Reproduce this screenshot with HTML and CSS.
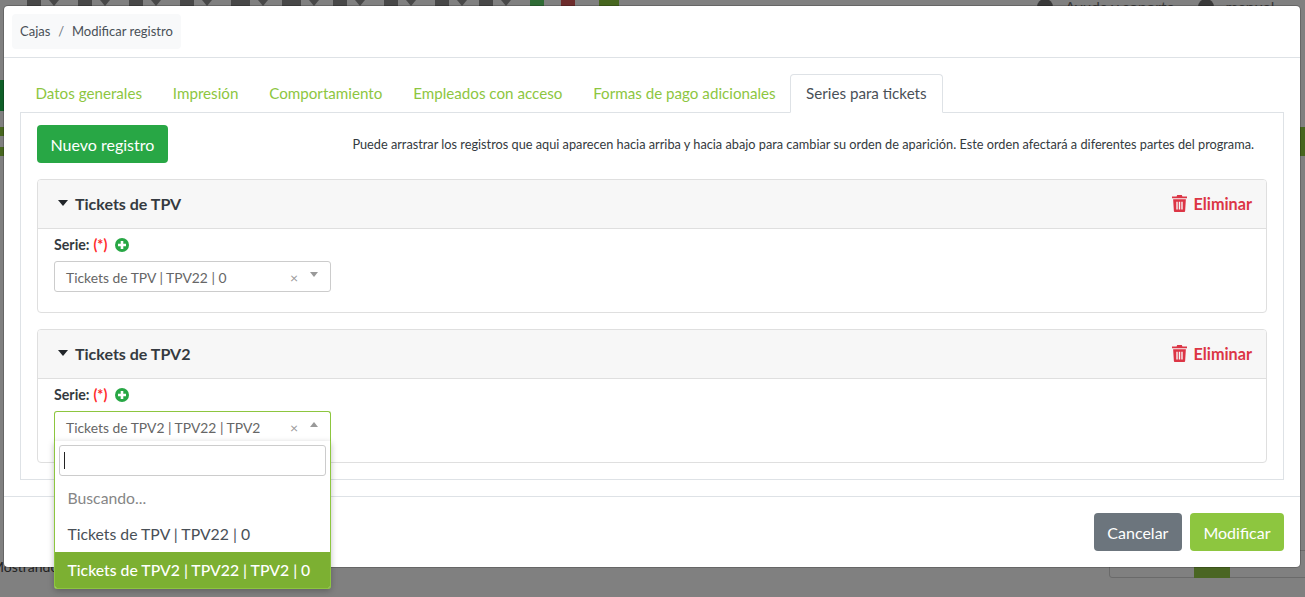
FILE: index.html
```html
<!DOCTYPE html>
<html lang="es">
<head>
    <meta charset="UTF-8">
    <title>Cajas - Modificar registro</title>
    <link rel="stylesheet" href="styles.css">
</head>
<body>
    <!-- page behind the dialog -->
    <div class="backdrop">
        <div class="top-tools">
            <span class="tool"><i class="tool-icon"></i><i class="tool-caret"></i></span>
            <span class="tool"><i class="tool-icon"></i><i class="tool-caret"></i></span>
            <span class="tool"><i class="tool-icon"></i><i class="tool-caret"></i></span>
            <span class="tool"><i class="tool-icon"></i><i class="tool-caret"></i></span>
            <span class="tool"><i class="tool-icon tool-wide"></i><i class="tool-caret"></i></span>
            <span class="tool"><i class="tool-icon tool-wide"></i><i class="tool-caret"></i></span>
            <span class="tool"><i class="tool-icon"></i><i class="tool-caret"></i></span>
            <span class="tool"><i class="tool-icon"></i><i class="tool-caret"></i></span>
            <span class="tool tool-short"><i class="tool-icon"></i><i class="tool-caret"></i></span>
            <span class="tool"><i class="tool-icon"></i><i class="tool-caret"></i></span>
            <i class="tool-icon tool-green"></i>
            <i class="tool-icon tool-red"></i>
            <i class="tool-icon tool-lime"></i>
        </div>
        <div class="top-help">
            <i class="help-dot"></i><span>Ayuda y soporte</span>
            <i class="help-dot"></i><span>manual</span>
        </div>
        <div class="side-bits">
            <div class="side-green"></div>
            <div class="side-olive"></div>
            <div class="side-olive"></div>
        </div>
        <div class="right-bar"></div>
        <div class="showing">Mostrando</div>
        <div class="pager"><span class="pager-on"></span></div>
    </div>

    <div class="modal">
        <div class="modal-head">
            <div class="breadcrumb">Cajas <span class="crumb-sep">/</span> Modificar registro</div>
        </div>
        <div class="modal-body">
            <ul class="tabs">
                <li>Datos generales</li>
                <li>Impresión</li>
                <li>Comportamiento</li>
                <li>Empleados con acceso</li>
                <li>Formas de pago adicionales</li>
                <li class="active">Series para tickets</li>
            </ul>
            <div class="tab-pane">
                <div class="toolbar">
                    <button class="btn btn-new">Nuevo registro</button>
                    <p class="hint">Puede arrastrar los registros que aqui aparecen hacia arriba y hacia abajo para cambiar su orden de aparición. Este orden afectará a diferentes partes del programa.</p>
                </div>

                <div class="panel">
                    <div class="panel-head">
                        <span class="caret"></span>
                        <span class="panel-title">Tickets de TPV</span>
                        <a class="delete">
                            <svg class="trash" viewBox="0 0 16 18"><path d="M5.500 0h5l.6 1.500H16v2H0v-2h4.900zM1.200 4.500h13.600L14 17a1 1 0 0 1-1 1H3a1 1 0 0 1-1-1zM4.600 7v8.500h1.500V7zm2.650 0v8.500h1.500V7zm2.650 0v8.500h1.500V7z" fill-rule="evenodd"/></svg>
                            Eliminar
                        </a>
                    </div>
                    <div class="panel-body">
                        <div class="field-label">Serie: <span class="required">(*)</span>
                            <svg class="plus" viewBox="0 0 14 14"><circle cx="7" cy="7" r="7"/><path d="M5.700 3h2.600v2.700H11v2.600H8.300V11H5.700V8.300H3V5.700h2.700z" fill="#fff"/></svg>
                        </div>
                        <div class="select">
                            <span class="select-text">Tickets de TPV | TPV22 | 0</span>
                            <span class="select-x">×</span>
                            <span class="arrow-down"></span>
                        </div>
                    </div>
                </div>

                <div class="panel panel-last">
                    <div class="panel-head">
                        <span class="caret"></span>
                        <span class="panel-title">Tickets de TPV2</span>
                        <a class="delete">
                            <svg class="trash" viewBox="0 0 16 18"><path d="M5.500 0h5l.6 1.500H16v2H0v-2h4.900zM1.200 4.500h13.600L14 17a1 1 0 0 1-1 1H3a1 1 0 0 1-1-1zM4.600 7v8.500h1.500V7zm2.650 0v8.500h1.500V7zm2.650 0v8.500h1.500V7z" fill-rule="evenodd"/></svg>
                            Eliminar
                        </a>
                    </div>
                    <div class="panel-body">
                        <div class="field-label">Serie: <span class="required">(*)</span>
                            <svg class="plus" viewBox="0 0 14 14"><circle cx="7" cy="7" r="7"/><path d="M5.700 3h2.600v2.700H11v2.600H8.300V11H5.700V8.300H3V5.700h2.700z" fill="#fff"/></svg>
                        </div>
                        <div class="select select-open">
                            <span class="select-text">Tickets de TPV2 | TPV22 | TPV2</span>
                            <span class="select-x">×</span>
                            <span class="arrow-up"></span>
                            <div class="dropdown">
                                <div class="search-box"><span class="cursor"></span></div>
                                <div class="option option-muted">Buscando...</div>
                                <div class="option">Tickets de TPV | TPV22 | 0</div>
                                <div class="option option-on">Tickets de TPV2 | TPV22 | TPV2 | 0</div>
                            </div>
                        </div>
                    </div>
                </div>
            </div>
        </div>
        <div class="modal-foot">
            <button class="btn btn-cancel">Cancelar</button>
            <button class="btn btn-save">Modificar</button>
        </div>
    </div>
</body>
</html>
```

FILE: styles.css
```css
html, body {
    height: 100%;
}
body {
    margin: 0;
    overflow: hidden;
    font-family: 'Lato', sans-serif;
    font-size: 14px;
    color: #343a40;
    background-color: #808080;
}
.backdrop {
    position: absolute;
    top: 0;
    right: 0;
    bottom: 0;
    left: 0;
    overflow: hidden;
}
.top-tools {
    position: absolute;
    top: 0;
    left: 27px;
    display: flex;
    height: 6px;
}
.tool {
    display: flex;
    width: 51px;
}
.tool-short {
    width: 44px;
}
.tool-icon {
    display: block;
    width: 14px;
    height: 6px;
    background-color: #484848;
}
.tool-wide {
    width: 19px;
}
.tool-caret {
    width: 0;
    height: 0;
    margin-left: 8px;
    border-left: 5px solid transparent;
    border-right: 5px solid transparent;
    border-top: 6px solid #484848;
}
.tool-green {
    margin-right: 17px;
    background-color: #2f6b35;
}
.tool-red {
    margin-right: 24px;
    background-color: #6d2c2c;
}
.tool-lime {
    width: 20px;
    background-color: #47661f;
}
.top-help {
    position: absolute;
    top: -2px;
    left: 1037px;
    display: flex;
    align-items: center;
    gap: 12px;
    font-size: 15.400px;
    color: #3a3a3a;
    white-space: nowrap;
}
.help-dot {
    display: block;
    width: 16px;
    height: 16px;
    border-radius: 50%;
    background-color: #3a3a3a;
}
.top-help span + .help-dot {
    margin-left: 11px;
}
.side-bits {
    position: absolute;
    top: 80px;
    left: 0;
    width: 4px;
}
.side-green {
    height: 31px;
    background-color: #0f5f28;
}
.side-olive {
    height: 9px;
    margin-top: 16px;
    background-color: #47661f;
}
.side-olive + .side-olive {
    margin-top: 11px;
}
.right-bar {
    position: absolute;
    top: 127px;
    right: 0;
    width: 5px;
    height: 29px;
    background-color: #47661f;
}
.showing {
    position: absolute;
    top: 558px;
    left: -9px;
    font-size: 14px;
    color: #222;
}
.pager {
    position: absolute;
    top: 550px;
    left: 1109px;
    width: 220px;
    height: 26px;
    border: 1px solid #6a6a6a;
    border-radius: 3px;
}
.pager-on {
    display: block;
    width: 36px;
    height: 27px;
    margin-left: 84px;
    background-color: #4a6623;
}

.modal {
    position: absolute;
    top: 6px;
    left: 4px;
    width: 1296px;
    height: 561px;
    display: flex;
    flex-direction: column;
    box-sizing: border-box;
    background-color: #fff;
    border-radius: 4px;
    box-shadow: 0 0 0 1px rgba(0, 0, 0, 0.2);
}
.modal-head {
    height: 52px;
    box-sizing: border-box;
    border-bottom: 1px solid #dee2e6;
    padding: 8px 8px 0;
    flex-shrink: 0;
}
.breadcrumb {
    display: inline-block;
    padding: 0 8px;
    line-height: 35px;
    height: 35px;
    font-size: 13px;
    color: #495057;
    background-color: #f8f9fa;
    border-radius: 4px;
}
.crumb-sep {
    margin: 0 4.500px;
    color: #6c757d;
}
.modal-body {
    flex: 1;
    padding: 16px;
}
.tabs {
    display: flex;
    list-style: none;
    margin: 0;
    padding: 0;
    height: 39px;
    font-size: 15.180px;
    color: #8dc63f;
}
.tabs li {
    padding: 0 14.400px;
    line-height: 37px;
    border: 1px solid transparent;
}
.tabs li.active {
    margin-left: -1px;
    padding: 0 15px;
    color: #495057;
    background-color: #fff;
    border: 1px solid #dee2e6;
    border-bottom-color: #fff;
    border-radius: 4px 4px 0 0;
    position: relative;
    z-index: 1;
    height: 39px;
    box-sizing: border-box;
}
.tab-pane {
    border: 1px solid #dee2e6;
    margin-top: -1px;
    padding: 12px 16px 16px;
    height: 368px;
    box-sizing: border-box;
}
.toolbar {
    display: flex;
    align-items: center;
    justify-content: space-between;
    margin-bottom: 16px;
}
.hint {
    margin: 0 13px 0 0;
    font-size: 12.740px;
    color: #343a40;
}
.btn {
    border: none;
    border-radius: 4px;
    font-family: inherit;
    font-size: 16px;
    color: #fff;
    height: 38px;
    padding: 0 13.500px;
}
.btn-new {
    background-color: #28a745;
}
.btn-cancel {
    background-color: #6c757d;
}
.btn-save {
    background-color: #8dc63f;
}
.panel {
    border: 1px solid #dfdfdf;
    border-radius: 4px;
    margin-bottom: 16px;
    height: 134px;
    box-sizing: border-box;
}
.panel-last {
    margin-bottom: 0;
}
.panel-head {
    display: flex;
    align-items: center;
    height: 49px;
    box-sizing: border-box;
    padding: 0 14px 2px 20px;
    background-color: #f7f7f7;
    border-bottom: 1px solid #dfdfdf;
    border-radius: 3px 3px 0 0;
}
.caret {
    width: 0;
    height: 0;
    border-left: 5.500px solid transparent;
    border-right: 5.500px solid transparent;
    border-top: 6px solid #212529;
    margin-right: 7px;
}
.panel-title {
    flex: 1;
    font-size: 16px;
    font-weight: 700;
}
.delete {
    display: flex;
    align-items: center;
    gap: 7px;
    font-size: 16.200px;
    font-weight: 700;
    color: #dc3545;
}
.trash {
    width: 15px;
    height: 17px;
    fill: #dc3545;
}
.panel-body {
    padding: 6px 16px 0;
}
.field-label {
    display: flex;
    align-items: center;
    height: 19px;
    font-size: 14.200px;
    font-weight: 700;
    margin-bottom: 7px;
}
.required {
    color: #ff2a2a;
    margin-left: 4px;
}
.plus {
    width: 14px;
    height: 14px;
    margin-left: 8px;
    fill: #28a745;
}
.select {
    position: relative;
    display: flex;
    align-items: center;
    width: 277px;
    height: 31px;
    box-sizing: border-box;
    border: 1px solid #ccc;
    border-radius: 3px;
    padding: 2px 12px 0 11px;
    font-size: 13.850px;
    color: #666;
    background-color: #fff;
}
.select-text {
    flex: 1;
}
.select-x {
    color: #999;
    font-size: 14px;
    margin-right: 12px;
}
.arrow-down {
    width: 0;
    height: 0;
    border-left: 4px solid transparent;
    border-right: 4px solid transparent;
    border-top: 5px solid #999;
    margin-bottom: 6px;
}
.arrow-up {
    width: 0;
    height: 0;
    border-left: 4px solid transparent;
    border-right: 4px solid transparent;
    border-bottom: 5px solid #999;
    margin-bottom: 6px;
}
.select-open {
    border-color: #8dc63f;
    border-bottom: none;
    border-radius: 3px 3px 0 0;
    padding-top: 0;
}
.dropdown {
    position: absolute;
    top: 29px;
    left: -1px;
    width: 277px;
    box-sizing: border-box;
    z-index: 5;
    background-color: #fff;
    border: 1px solid #8dc63f;
    border-top: none;
    border-radius: 0 0 3px 3px;
    box-shadow: 0 2px 6px rgba(0, 0, 0, 0.25);
    font-size: 15.750px;
}
.search-box {
    height: 31px;
    box-sizing: border-box;
    margin: 4px;
    border: 1px solid #ccc;
    border-radius: 3px;
    display: flex;
    align-items: center;
    padding-left: 4px;
}
.cursor {
    width: 1px;
    height: 17px;
    background-color: #222;
}
.option {
    height: 36px;
    line-height: 36px;
    padding-left: 12.500px;
    color: #495057;
}
.option-muted {
    color: #868686;
}
.option-on {
    background-color: #7cb032;
    color: #fff;
    font-weight: 500;
    border-radius: 0 0 2px 2px;
}
.modal-foot {
    display: flex;
    justify-content: flex-end;
    gap: 8px;
    height: 71px;
    flex-shrink: 0;
    box-sizing: border-box;
    border-top: 1px solid #dee2e6;
    padding: 16px 16px 0;
}
```
